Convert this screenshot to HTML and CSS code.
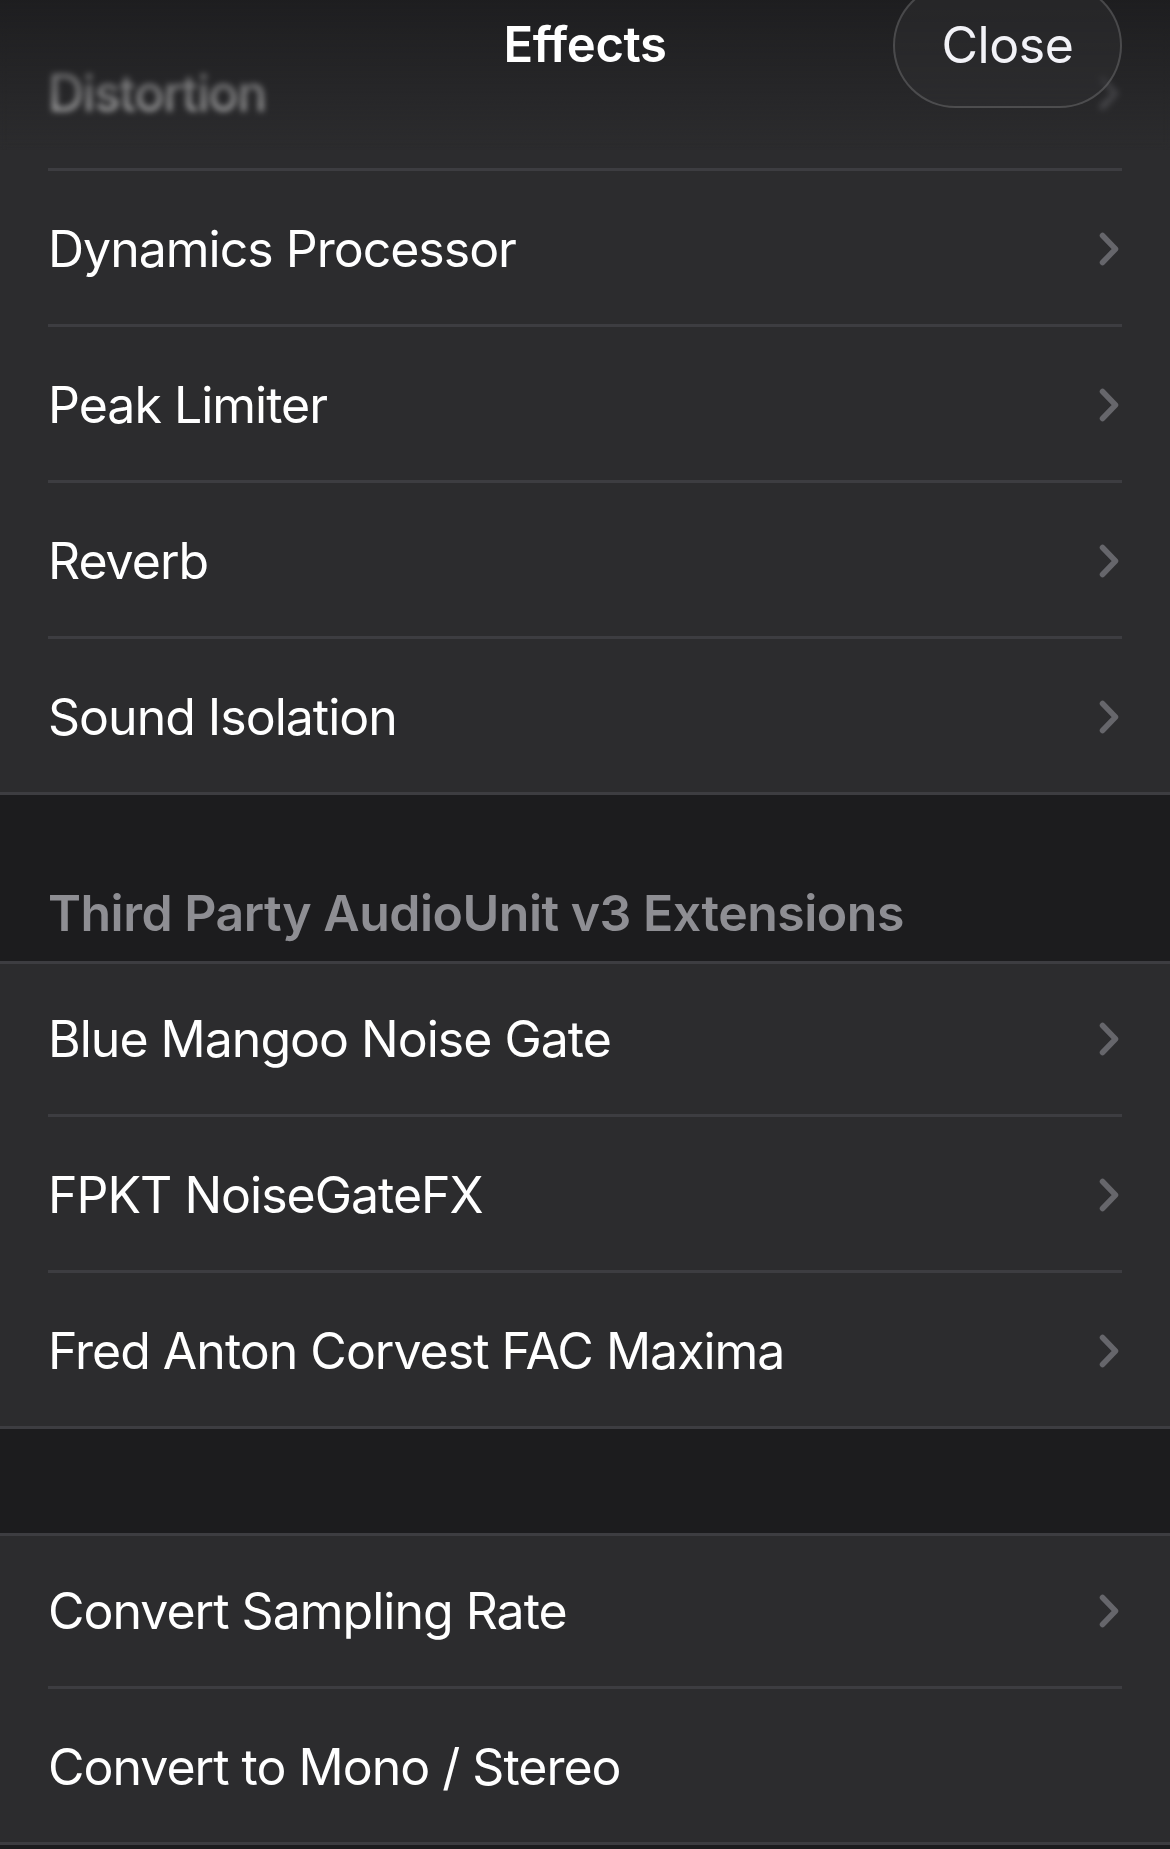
FILE: index.html
```html
<!DOCTYPE html>
<html lang="en">

<head>
  <meta charset="UTF-8" />
  <meta name="viewport" content="width=device-width, initial-scale=1" />
  <title>Effects</title>
  <link rel="stylesheet" href="styles.css">
</head>

<body>
  <div class="sheet">

    <!-- Sheet header, floats over the scrolled list -->
    <header class="sheet-header">
      <span></span>
      <h1 class="title">Effects</h1>
      <button class="close-btn">Close</button>
    </header>

    <section class="group scrolled">
      <div class="row"><div class="row-inner"><span>Distortion</span><svg class="chev" viewBox="0 0 20 34"><path d="M3.5 3.5 L16.5 17 L3.5 30.5"/></svg></div></div>
      <div class="row"><div class="row-inner"><span>Dynamics Processor</span><svg class="chev" viewBox="0 0 20 34"><path d="M3.5 3.5 L16.5 17 L3.5 30.5"/></svg></div></div>
      <div class="row"><div class="row-inner"><span>Peak Limiter</span><svg class="chev" viewBox="0 0 20 34"><path d="M3.5 3.5 L16.5 17 L3.5 30.5"/></svg></div></div>
      <div class="row"><div class="row-inner"><span>Reverb</span><svg class="chev" viewBox="0 0 20 34"><path d="M3.5 3.5 L16.5 17 L3.5 30.5"/></svg></div></div>
      <div class="row"><div class="row-inner"><span>Sound Isolation</span><svg class="chev" viewBox="0 0 20 34"><path d="M3.5 3.5 L16.5 17 L3.5 30.5"/></svg></div></div>
    </section>

    <h2 class="group-title">Third Party AudioUnit v3 Extensions</h2>

    <section class="group">
      <div class="row"><div class="row-inner"><span>Blue Mangoo Noise Gate</span><svg class="chev" viewBox="0 0 20 34"><path d="M3.5 3.5 L16.5 17 L3.5 30.5"/></svg></div></div>
      <div class="row"><div class="row-inner"><span>FPKT NoiseGateFX</span><svg class="chev" viewBox="0 0 20 34"><path d="M3.5 3.5 L16.5 17 L3.5 30.5"/></svg></div></div>
      <div class="row"><div class="row-inner"><span>Fred Anton Corvest FAC Maxima</span><svg class="chev" viewBox="0 0 20 34"><path d="M3.5 3.5 L16.5 17 L3.5 30.5"/></svg></div></div>
    </section>

    <div class="group-gap"></div>

    <section class="group">
      <div class="row"><div class="row-inner"><span>Convert Sampling Rate</span><svg class="chev" viewBox="0 0 20 34"><path d="M3.5 3.5 L16.5 17 L3.5 30.5"/></svg></div></div>
      <div class="row"><div class="row-inner"><span>Convert to Mono / Stereo</span></div></div>
    </section>

  </div>
</body>

</html>
```

FILE: styles.css
```css
body {
  margin: 0;
  background: #000;
  font-family: Inter, 'Noto Sans', sans-serif;
  color: #fff;
  overflow: hidden;
}

.sheet {
  position: relative;
  background: #1c1c1e;
  margin-top: -161px;
  padding-top: 161px;
  border-radius: 211px 211px 0 0;
  min-height: 1849px;
}

.sheet-header {
  position: absolute;
  top: 161px;
  left: 0;
  right: 0;
  height: 90px;
  padding-bottom: 60px;
  display: grid;
  grid-template-columns: 1fr auto 1fr;
  grid-template-rows: 90px;
  align-items: center;
  z-index: 5;
  background: linear-gradient(to bottom, rgba(28, 28, 30, 0.88) 0%, rgba(34, 34, 36, 0.55) 60%, rgba(44, 44, 46, 0) 100%);
  backdrop-filter: blur(3px);
}

.title {
  margin: 0;
  font-size: 49px;
  font-weight: 600;
  letter-spacing: -0.4px;
  line-height: 60px;
}

.close-btn {
  justify-self: end;
  margin: -17.5px 48px -17.5px 0;
  width: 229px;
  height: 125px;
  border-radius: 64px;
  border: 2px solid rgba(255, 255, 255, 0.16);
  background: rgba(48, 48, 52, 0.45);
  color: #f2f2f7;
  font-family: inherit;
  font-size: 50px;
  letter-spacing: -0.4px;
  padding: 0;
}

.group {
  background: #2c2c2e;
  box-shadow: inset 0 3px 0 #3d3d41;
  border-bottom: 3px solid #3d3d41;
}

.group.scrolled {
  box-shadow: none;
  padding-top: 15px;
}

.row {
  padding-left: 48px;
  font-size: 50px;
  letter-spacing: -1px;
}

.row-inner {
  height: 150px;
  padding-top: 3px;
  margin-right: 48px;
  display: flex;
  align-items: center;
  justify-content: space-between;
  border-bottom: 3px solid #3d3d41;
}

.row:last-child .row-inner {
  border-bottom: none;
}

.chev {
  width: 20px;
  height: 34px;
  margin-right: 3px;
  fill: none;
  stroke: #66666b;
  stroke-width: 5.5;
  stroke-linecap: round;
  stroke-linejoin: round;
}

.group-title {
  margin: 0;
  height: 78px;
  padding: 88px 48px 0;
  font-size: 50px;
  font-weight: 600;
  letter-spacing: -0.5px;
  line-height: 60px;
  color: #8e8e93;
}

.group-gap {
  height: 104px;
}
```
